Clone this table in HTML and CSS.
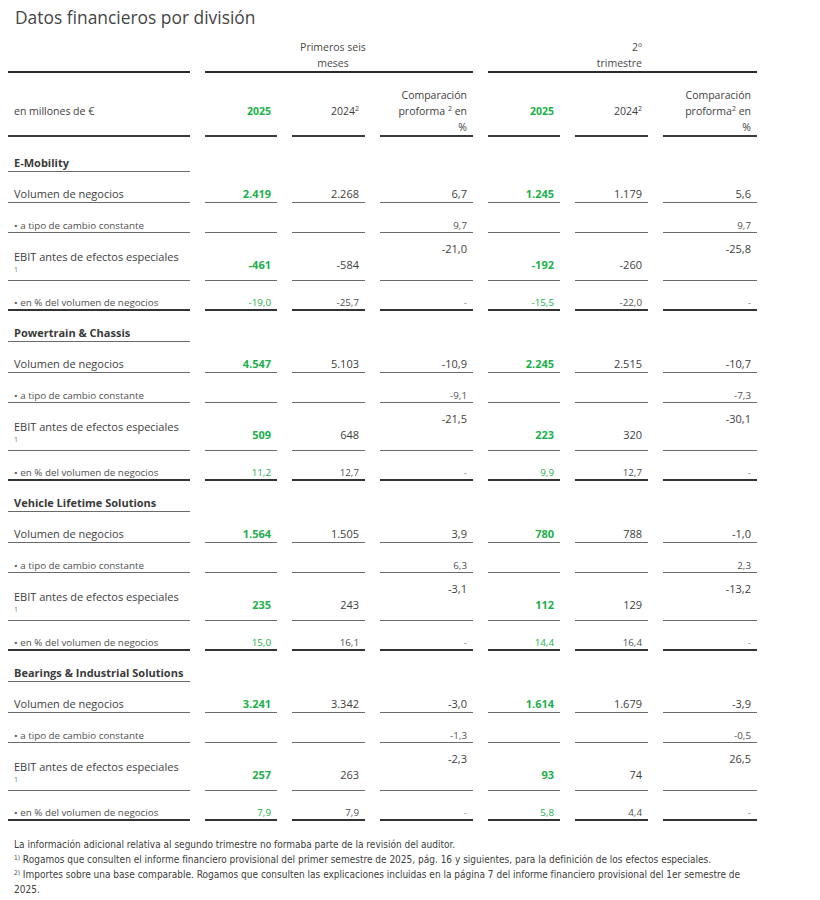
FILE: index.html
```html
<!DOCTYPE html>
<html lang="es">
<head>
<meta charset="utf-8">
<title>Datos financieros por división</title>
<link rel="stylesheet" href="styles.css">
</head>
<body>
<div class="page">
  <h1 class="title">Datos financieros por división</h1>

  <div class="row r-group">
    <div class="c lab hd"></div>
    <div class="c grp g1 hd"><span class="t">Primeros seis<br>meses</span></div>
    <div class="c grp g2 hd"><span class="t">2º<br>trimestre</span></div>
  </div>

  <div class="row r-years">
    <div class="c lab hd single">en millones de €</div>
    <div class="c num hd single green">2025</div>
    <div class="c num hd single"><span class="t">2024<sup>2</sup></span></div>
    <div class="c num hd multi"><span class="t">Comparación<br>proforma <sup>2</sup> en<br>%</span></div>
    <div class="c num hd single green">2025</div>
    <div class="c num hd single"><span class="t">2024<sup>2</sup></span></div>
    <div class="c num hd multi"><span class="t">Comparación<br>proforma<sup>2</sup> en<br>%</span></div>
  </div>

  <!-- E-Mobility -->
  <div class="row r-sec first"><div class="c lab sec">E-Mobility</div></div>
  <div class="row r-vol">
    <div class="c lab">Volumen de negocios</div>
    <div class="c num green">2.419</div><div class="c num">2.268</div><div class="c num">6,7</div>
    <div class="c num green">1.245</div><div class="c num">1.179</div><div class="c num">5,6</div>
  </div>
  <div class="row r-tipo">
    <div class="c lab">• a tipo de cambio constante</div>
    <div class="c num"></div><div class="c num"></div><div class="c num">9,7</div>
    <div class="c num"></div><div class="c num"></div><div class="c num">9,7</div>
  </div>
  <div class="row r-ebit">
    <div class="c lab"><span class="ebit-l">EBIT antes de efectos especiales</span><span class="fn">1</span></div>
    <div class="c num green">-461</div><div class="c num">-584</div><div class="c num up">-21,0</div>
    <div class="c num green">-192</div><div class="c num">-260</div><div class="c num up">-25,8</div>
  </div>
  <div class="row r-pct">
    <div class="c lab">• en % del volumen de negocios</div>
    <div class="c num green">-19,0</div><div class="c num">-25,7</div><div class="c num dash">-</div>
    <div class="c num green">-15,5</div><div class="c num">-22,0</div><div class="c num dash">-</div>
  </div>

  <!-- Powertrain & Chassis -->
  <div class="row r-sec"><div class="c lab sec">Powertrain &amp; Chassis</div></div>
  <div class="row r-vol">
    <div class="c lab">Volumen de negocios</div>
    <div class="c num green">4.547</div><div class="c num">5.103</div><div class="c num">-10,9</div>
    <div class="c num green">2.245</div><div class="c num">2.515</div><div class="c num">-10,7</div>
  </div>
  <div class="row r-tipo">
    <div class="c lab">• a tipo de cambio constante</div>
    <div class="c num"></div><div class="c num"></div><div class="c num">-9,1</div>
    <div class="c num"></div><div class="c num"></div><div class="c num">-7,3</div>
  </div>
  <div class="row r-ebit">
    <div class="c lab"><span class="ebit-l">EBIT antes de efectos especiales</span><span class="fn">1</span></div>
    <div class="c num green">509</div><div class="c num">648</div><div class="c num up">-21,5</div>
    <div class="c num green">223</div><div class="c num">320</div><div class="c num up">-30,1</div>
  </div>
  <div class="row r-pct">
    <div class="c lab">• en % del volumen de negocios</div>
    <div class="c num green">11,2</div><div class="c num">12,7</div><div class="c num dash">-</div>
    <div class="c num green">9,9</div><div class="c num">12,7</div><div class="c num dash">-</div>
  </div>

  <!-- Vehicle Lifetime Solutions -->
  <div class="row r-sec"><div class="c lab sec">Vehicle Lifetime Solutions</div></div>
  <div class="row r-vol">
    <div class="c lab">Volumen de negocios</div>
    <div class="c num green">1.564</div><div class="c num">1.505</div><div class="c num">3,9</div>
    <div class="c num green">780</div><div class="c num">788</div><div class="c num">-1,0</div>
  </div>
  <div class="row r-tipo">
    <div class="c lab">• a tipo de cambio constante</div>
    <div class="c num"></div><div class="c num"></div><div class="c num">6,3</div>
    <div class="c num"></div><div class="c num"></div><div class="c num">2,3</div>
  </div>
  <div class="row r-ebit">
    <div class="c lab"><span class="ebit-l">EBIT antes de efectos especiales</span><span class="fn">1</span></div>
    <div class="c num green">235</div><div class="c num">243</div><div class="c num up">-3,1</div>
    <div class="c num green">112</div><div class="c num">129</div><div class="c num up">-13,2</div>
  </div>
  <div class="row r-pct">
    <div class="c lab">• en % del volumen de negocios</div>
    <div class="c num green">15,0</div><div class="c num">16,1</div><div class="c num dash">-</div>
    <div class="c num green">14,4</div><div class="c num">16,4</div><div class="c num dash">-</div>
  </div>

  <!-- Bearings & Industrial Solutions -->
  <div class="row r-sec"><div class="c lab sec">Bearings &amp; Industrial Solutions</div></div>
  <div class="row r-vol">
    <div class="c lab">Volumen de negocios</div>
    <div class="c num green">3.241</div><div class="c num">3.342</div><div class="c num">-3,0</div>
    <div class="c num green">1.614</div><div class="c num">1.679</div><div class="c num">-3,9</div>
  </div>
  <div class="row r-tipo">
    <div class="c lab">• a tipo de cambio constante</div>
    <div class="c num"></div><div class="c num"></div><div class="c num">-1,3</div>
    <div class="c num"></div><div class="c num"></div><div class="c num">-0,5</div>
  </div>
  <div class="row r-ebit">
    <div class="c lab"><span class="ebit-l">EBIT antes de efectos especiales</span><span class="fn">1</span></div>
    <div class="c num green">257</div><div class="c num">263</div><div class="c num up">-2,3</div>
    <div class="c num green">93</div><div class="c num">74</div><div class="c num up">26,5</div>
  </div>
  <div class="row r-pct">
    <div class="c lab">• en % del volumen de negocios</div>
    <div class="c num green">7,9</div><div class="c num">7,9</div><div class="c num dash">-</div>
    <div class="c num green">5,8</div><div class="c num">4,4</div><div class="c num dash">-</div>
  </div>

  <div class="notes">
    <p>La información adicional relativa al segundo trimestre no formaba parte de la revisión del auditor.</p>
    <p><sup>1)</sup> Rogamos que consulten el informe financiero provisional del primer semestre de 2025, pág. 16 y siguientes, para la definición de los efectos especiales.</p>
    <p><sup>2)</sup> Importes sobre una base comparable. Rogamos que consulten las explicaciones incluidas en la página 7 del informe financiero provisional del 1er semestre de 2025.</p>
  </div>
</div>
</body>
</html>
```

FILE: styles.css
```css
* { box-sizing: border-box; }

html, body {
  margin: 0;
  padding: 0;
  background: #ffffff;
}

body {
  font-family: "Open Sans", "Noto Sans", sans-serif;
  color: #3e3e3e;
}

.page {
  padding: 0 8px;
  width: 820px;
}

.title {
  margin: 5px 0 0 7px;
  font-size: 17.4px;
  line-height: 24px;
  font-weight: 400;
  color: #454545;
}

.row {
  display: grid;
  grid-template-columns: 182px 72px 73px 93px 72px 73px 94px;
  column-gap: 15px;
}

.c {
  display: flex;
  flex-direction: column;
  align-items: flex-end;
  justify-content: flex-end;
  text-align: right;
  border-bottom: 1px solid #6a6a6a;
  padding: 0 6px 1px 6px;
  font-size: 11px;
  line-height: 15px;
  white-space: nowrap;
}

.c.lab {
  align-items: flex-start;
  text-align: left;
}

.t { display: block; }

.green { color: #20b04b; }

sup {
  font-size: 7px;
  line-height: 0;
  vertical-align: 4px;
}

/* header rows */
.r-group { height: 44px; }
.r-group .c {
  border-bottom: 2px solid #2a2a2a;
  padding-bottom: 0;
  line-height: 16px;
  font-size: 10.5px;
  color: #4a4a4a;
}
.r-group .g1 {
  grid-column: 2 / span 3;
  align-items: center;
  text-align: center;
  padding-right: 18px;
}
.r-group .g2 {
  grid-column: 5 / span 3;
  text-align: right;
  padding-right: 115px;
}

.r-years { height: 64px; }
.r-years .c {
  border-bottom: 2px solid #3a3a3a;
  font-size: 10.5px;
  line-height: 16px;
  padding-bottom: 0;
}
.r-years .single { padding-bottom: 16px; }
.r-years .green { font-weight: 700; }

/* section header */
.r-sec { height: 31px; }
.r-sec.first { height: 35px; }
.c.sec {
  font-weight: 700;
  color: #3a3a3a;
  font-size: 11px;
}

.r-vol { height: 31px; }
.r-vol .green { font-weight: 700; }

.r-tipo { height: 30px; }
.r-tipo .c {
  font-size: 9.8px;
  line-height: 12px;
  padding-bottom: 0;
  color: #505050;
}

.r-ebit { height: 48px; }
.r-ebit .c { padding-bottom: 8px; }
.r-ebit .c.up { padding-bottom: 24px; }
.r-ebit .c.lab { padding-bottom: 5px; }
.r-ebit .green { font-weight: 700; }
.ebit-l { display: block; }
.fn {
  display: block;
  font-size: 7px;
  line-height: 11px;
  color: #777;
}

.r-pct { height: 30px; }
.r-pct .c {
  border-bottom: 2px solid #333333;
  font-size: 9.8px;
  line-height: 12px;
  padding-bottom: 0;
  color: #505050;
}
.r-pct .green { color: #20b04b; }
.r-pct .dash { color: #888; }

/* footnotes */
.notes {
  margin: 16px 0 0 6px;
  font-family: "Liberation Sans Narrow", "DejaVu Sans Condensed", "Open Sans", sans-serif;
  font-size: 10px;
  line-height: 15px;
  color: #404040;
}
.notes p {
  margin: 0;
  width: 740px;
}
.notes sup {
  font-size: 6.5px;
  vertical-align: 3px;
}
```
